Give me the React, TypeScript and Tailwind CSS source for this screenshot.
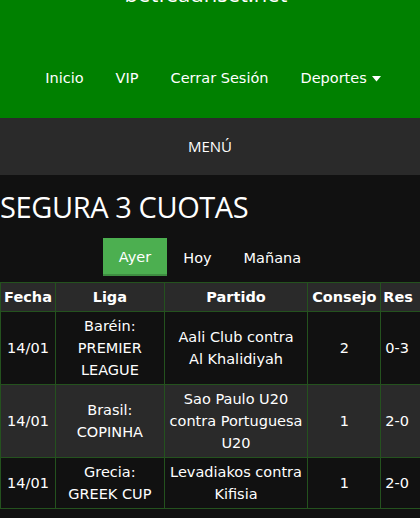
import React from 'react';

const rows = [
  { fecha: '14/01', liga: ['Baréin:', 'PREMIER', 'LEAGUE'], partido: ['Aali Club contra', 'Al Khalidiyah'], consejo: '2', res: '0-3' },
  { fecha: '14/01', liga: ['Brasil:', 'COPINHA'], partido: ['Sao Paulo U20', 'contra Portuguesa', 'U20'], consejo: '1', res: '2-0' },
  { fecha: '14/01', liga: ['Grecia:', 'GREEK CUP'], partido: ['Levadiakos contra', 'Kifisia'], consejo: '1', res: '2-0' },
];

const font = { fontFamily: '"DejaVu Sans", Verdana, sans-serif' };

export default function App() {
  return (
    <div className="w-[420px] h-[518px] overflow-hidden bg-[#111111] text-white font-['DejaVu_Sans',sans-serif]">
      <header className="bg-[#008000] h-[118px] flex flex-col items-center">
        <div className="-mt-[18px] h-[22px] text-[22px] leading-[22px] font-['Open_Sans',sans-serif] ml-[-8px]">betfeaunset.net</div>
        <nav className="mt-[64px] flex items-center gap-[32px] text-[14.5px] pl-[6px]">
          <span>Inicio</span>
          <span>VIP</span>
          <span>Cerrar Sesión</span>
          <span className="flex items-center gap-[5px]">
            Deportes
            <svg width="9" height="6" viewBox="0 0 9 6"><path d="M0 0h9L4.5 5.5z" fill="white" /></svg>
          </span>
        </nav>
      </header>

      <div className="bg-[#2a2a2a] h-[57px] flex items-center justify-center text-[15px] font-['Open_Sans',sans-serif]">
        MENÚ
      </div>

      <h1 className="mt-[12px] text-[29px] leading-[40px] font-['Open_Sans',sans-serif] tracking-[-0.4px]">SEGURA 3 CUOTAS</h1>

      <div className="mt-[11px] flex justify-center text-[14.5px]">
        <span className="bg-[#4caf50] px-[16px] pt-[3px] h-[38px] flex items-center justify-center border-b-2 border-[#3e8e41]">Ayer</span>
        <span className="px-[16px] pt-[3px] h-[38px] flex items-center justify-center">Hoy</span>
        <span className="px-[16px] pt-[3px] h-[38px] flex items-center justify-center">Mañana</span>
      </div>

      <table className="mt-[6px] border-collapse text-[14.5px] leading-[22px] text-center w-[470px]" style={font}>
        <colgroup>
          <col className="w-[55px]" />
          <col className="w-[109px]" />
          <col className="w-[144px]" />
          <col className="w-[73px]" />
          <col className="w-[89px]" />
        </colgroup>
        <thead>
          <tr className="bg-[#2a2a2a] font-bold">
            {['Fecha', 'Liga', 'Partido', 'Consejo', 'Res'].map((h) => (
              <th key={h} className={'border border-[#24521e] px-[2px] py-[3px] ' + (h === 'Res' ? 'text-left' : 'text-center')}>
                {h}
              </th>
            ))}
          </tr>
        </thead>
        <tbody>
          {rows.map((r, i) => (
            <tr key={i} className={i % 2 === 1 ? 'bg-[#2a2a2a]' : 'bg-[#111111]'}>
              <td className="border border-[#24521e] py-[3px]">{r.fecha}</td>
              <td className="border border-[#24521e] py-[3px]">
                {r.liga.map((l) => <div key={l}>{l}</div>)}
              </td>
              <td className="border border-[#24521e] py-[3px]">
                {r.partido.map((p) => <div key={p}>{p}</div>)}
              </td>
              <td className="border border-[#24521e] py-[3px]">{r.consejo}</td>
              <td className="border border-[#24521e] py-[3px] text-left pl-[4px]">{r.res}</td>
            </tr>
          ))}
        </tbody>
      </table>
    </div>
  );
}
